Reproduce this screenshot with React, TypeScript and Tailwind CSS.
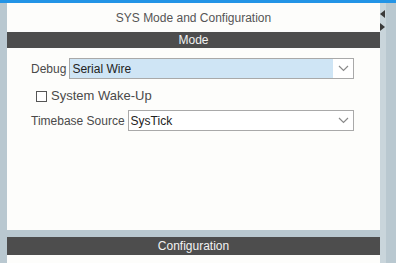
import React from "react";

function Chevron() {
  return (
    <svg width="11" height="7" viewBox="0 0 11 7" className="text-[#8a8a8a]">
      <path d="M1 1 L5.5 5.5 L10 1" fill="none" stroke="currentColor" strokeWidth="1.2" />
    </svg>
  );
}

function Select({ value, active }: { value: string; active?: boolean }) {
  return (
    <div className="flex h-[21px] flex-1 border border-[#a9a9a9] bg-white">
      <div
        className={
          active
            ? "flex flex-1 items-center bg-[#cfe5f5] pl-[2px] text-[#222]"
            : "flex flex-1 items-center pl-[2px] text-[#222]"
        }
      >
        {value}
      </div>
      <div className="flex w-[20px] items-center justify-center">
        <Chevron />
      </div>
    </div>
  );
}

export default function App() {
  return (
    <div
      className="flex h-[263px] w-[396px] flex-col overflow-hidden bg-[#b9c8d0] text-[12px] text-[#4a4a4a]"
      style={{ fontFamily: '"Liberation Sans", Arial, sans-serif' }}
    >
      <div className="h-[3px] bg-[#2394e6]" />
      <div className="flex flex-1">
        <div className="w-[7px] bg-[#b9c8d0]" />

        {/* panels */}
        <div className="flex w-[373px] flex-col">
          <div className="flex h-[227px] flex-col bg-[#fdfdfb]">
            <div className="flex h-[29px] items-center justify-center text-[#555]">
              SYS Mode and Configuration
            </div>
            <div className="flex h-[16px] items-center justify-center bg-[#4d4d4d] text-[#f2f2f2]">
              Mode
            </div>
            <div className="flex flex-col pl-[24px] pr-[26px] pt-[10px]">
              <div className="flex items-center gap-[3px]">
                <span>Debug</span>
                <Select value="Serial Wire" active />
              </div>
              <div className="mt-[8px] flex h-[18px] items-center gap-[4px] pl-[5px] text-[13px]">
                <div className="h-[11px] w-[11px] border border-[#555] bg-white" />
                <span>System Wake-Up</span>
              </div>
              <div className="mt-[5px] flex items-center gap-[3px]">
                <span>Timebase Source</span>
                <Select value="SysTick" />
              </div>
            </div>
          </div>
          <div className="h-[7px]" />
          <div className="flex h-[18px] items-center justify-center bg-[#4d4d4d] text-[#f2f2f2]">
            Configuration
          </div>
          <div className="flex-1 bg-[#fdfdfb]" />
        </div>

        {/* right strip with arrows */}
        <div className="flex w-[16px] bg-[#b9c8d0]">
          <div className="flex w-[6px] flex-col items-start bg-[#c9d5db] pt-[7px]">
            <svg width="5" height="8" viewBox="0 0 5 8">
              <path d="M5 0 L0 4 L5 8 Z" fill="#3a3a3a" />
            </svg>
            <svg width="5" height="8" viewBox="0 0 5 8" className="mt-[5px]">
              <path d="M0 0 L5 4 L0 8 Z" fill="#3a3a3a" />
            </svg>
          </div>
        </div>
      </div>
    </div>
  );
}
